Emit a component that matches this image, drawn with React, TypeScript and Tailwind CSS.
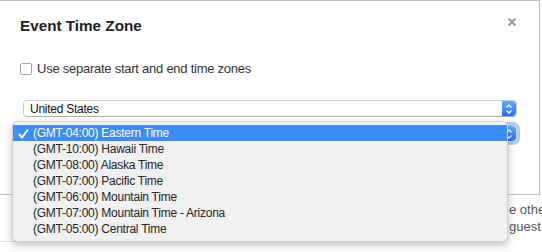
import React from "react";

const zones = [
  "(GMT-04:00) Eastern Time",
  "(GMT-10:00) Hawaii Time",
  "(GMT-08:00) Alaska Time",
  "(GMT-07:00) Pacific Time",
  "(GMT-06:00) Mountain Time",
  "(GMT-07:00) Mountain Time - Arizona",
  "(GMT-05:00) Central Time",
];

function Stepper() {
  return (
    <div className="w-[14px] self-stretch rounded-r-[4px] bg-gradient-to-b from-[#62a8fb] to-[#1f74f1] flex items-center justify-center">
      <svg width="8" height="12" viewBox="0 0 8 12">
        <path d="M1.5 4.5 L4 2 L6.5 4.5" fill="none" stroke="white" strokeWidth="1.3" />
        <path d="M1.5 7.5 L4 10 L6.5 7.5" fill="none" stroke="white" strokeWidth="1.3" />
      </svg>
    </div>
  );
}

export default function App() {
  return (
    <div
      className="w-[542px] h-[252px] overflow-hidden bg-white relative"
      style={{ fontFamily: '"Liberation Sans", Arial, sans-serif' }}
    >
      <div className="w-[540px] h-[195px] border-t border-r border-b border-[#bdbdbd] bg-white pl-5 relative">
        <div className="flex justify-between items-start pt-[16px] pr-[22px]">
          <div className="text-[15.25px] leading-[18px] font-bold text-[#222]">Event Time Zone</div>
          <svg width="10" height="10" viewBox="0 0 10 10" className="mt-0">
            <path d="M1.5 1.5 L8.5 8.5 M8.5 1.5 L1.5 8.5" stroke="#9a9a9a" strokeWidth="2.2" />
          </svg>
        </div>
        <div className="flex items-center mt-[26px] h-[16px]">
          <div className="w-[12px] h-[12px] rounded-[2px] border border-[#a3a3a3] bg-white" />
          <span className="ml-[5px] text-[13px] leading-[16px] tracking-[-0.25px] text-[#333]">
            Use separate start and end time zones
          </span>
        </div>
        <div className="ml-[3px] w-[494px] mt-[23px] h-[17px] flex rounded-[4px] border border-[#cfcfcf] border-b-[#b0b0b0] bg-white">
          <div className="flex-1 pl-[6px] text-[12px] tracking-[-0.25px] leading-[16px] text-[#111]">United States</div>
          <Stepper />
        </div>
        <div className="relative ml-[3px] w-[494px] mt-[8px]">
          <div className="h-[17px] flex rounded-[4px] border border-[#cfcfcf] bg-white shadow-[0_0_0_3px_rgba(100,160,245,0.55)]">
            <div className="flex-1" />
            <Stepper />
          </div>
          <div className="absolute left-[-11px] top-[-4px] w-[496px] h-[121px] rounded-[5px] bg-[#f0f0f0] border border-[#d0d0d0] shadow-[0_3px_8px_rgba(0,0,0,0.25)] py-[3px] z-10">
            {zones.map((z, i) => (
              <div
                key={i}
                className={
                  "h-[16px] flex items-center text-[12px] tracking-[-0.25px] leading-[16px] " +
                  (i === 0 ? "bg-[#3b8cf5] text-white" : "text-[#262626]")
                }
              >
                <div className="w-[20px] flex justify-end pr-[4px]">
                  {i === 0 && (
                    <svg width="11" height="11" viewBox="0 0 11 11">
                      <path d="M1 6 L4 9.5 L10 1.5" fill="none" stroke="white" strokeWidth="2" />
                    </svg>
                  )}
                </div>
                <span>{z}</span>
              </div>
            ))}
          </div>
        </div>
      </div>
      <div className="pl-[509px] pt-[6px] whitespace-nowrap text-[13px] leading-[17px] text-[#555]">
        <div>e othe</div>
        <div>guest</div>
      </div>
      <div className="mt-[6px] h-px w-[415px] bg-[#e0e0e0]" />
    </div>
  );
}
